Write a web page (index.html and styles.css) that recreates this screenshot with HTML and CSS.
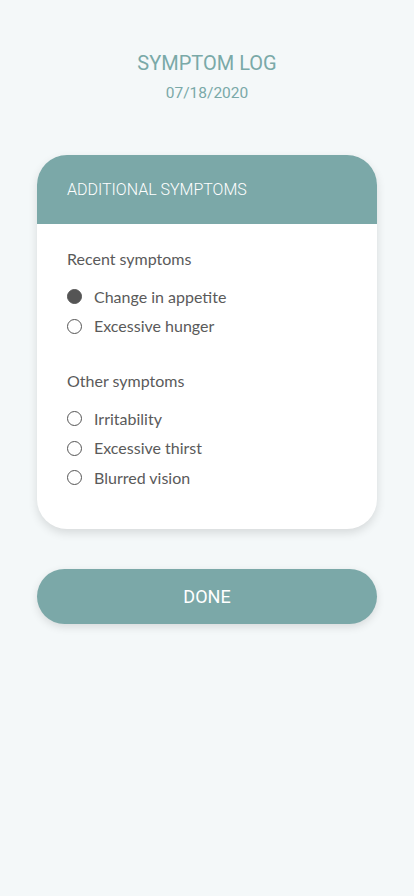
FILE: index.html
```html
<!DOCTYPE html>
<html lang="en">
<head>
    <meta charset="UTF-8">
    <meta name="viewport" content="width=device-width, initial-scale=1.0">
    <title>Symptom Log</title>
    <link rel="stylesheet" href="styles.css">
</head>
<body>
    <header class="page-header">
        <h1>SYMPTOM LOG</h1>
        <p class="date">07/18/2020</p>
    </header>
    <main class="container">
        <section class="card">
            <div class="card-header">ADDITIONAL SYMPTOMS</div>
            <div class="card-body">
                <div class="group">
                    <h2>Recent symptoms</h2>
                    <ul class="options">
                        <li class="option checked"><span class="radio"></span>Change in appetite</li>
                        <li class="option"><span class="radio"></span>Excessive hunger</li>
                    </ul>
                </div>
                <div class="group">
                    <h2>Other symptoms</h2>
                    <ul class="options">
                        <li class="option"><span class="radio"></span>Irritability</li>
                        <li class="option"><span class="radio"></span>Excessive thirst</li>
                        <li class="option"><span class="radio"></span>Blurred vision</li>
                    </ul>
                </div>
            </div>
        </section>
        <button class="done-btn">DONE</button>
    </main>
</body>
</html>
```

FILE: styles.css
```css
* {
    margin: 0;
    padding: 0;
    box-sizing: border-box;
}
body {
    font-family: 'Lato', 'Open Sans', sans-serif;
    background-color: #f4f8f9;
    color: #555;
    min-height: 100vh;
}
.page-header {
    text-align: center;
    padding-top: 52px;
    font-family: 'Roboto', sans-serif;
    color: #7aa9a8;
}
.page-header h1 {
    font-size: 20px;
    font-weight: 400;
    line-height: 22px;
}
.date {
    font-size: 15.5px;
    margin-top: 10px;
    line-height: 18px;
}
.container {
    padding: 0 37px;
    margin-top: 53px;
}
.card {
    background-color: #fff;
    border-radius: 30px;
    overflow: hidden;
    box-shadow: 0 4px 10px rgba(0, 0, 0, 0.12);
}
.card-header {
    background-color: #7ba8a8;
    color: #fff;
    font-family: 'Roboto', sans-serif;
    font-weight: 300;
    font-size: 16px;
    height: 69px;
    padding: 25px 30px 0;
}
.card-body {
    padding: 24px 30px 36px;
}
.group + .group {
    margin-top: 29px;
}
.group h2 {
    font-size: 16px;
    font-weight: 400;
    line-height: 22px;
    color: #5a5a5a;
}
.options {
    list-style: none;
    margin-top: 12px;
}
.option {
    display: flex;
    align-items: center;
    font-size: 16px;
    line-height: 22px;
    height: 29.5px;
    color: #5a5a5a;
}
.radio {
    width: 15px;
    height: 15px;
    border: 1.2px solid #555;
    border-radius: 50%;
    margin-right: 12px;
}
.option.checked .radio {
    background-color: #555;
}
.done-btn {
    display: block;
    width: 100%;
    height: 55px;
    margin-top: 40px;
    border: none;
    border-radius: 28px;
    background-color: #7ba8a8;
    color: #fff;
    font-family: 'Roboto', sans-serif;
    font-size: 18px;
    box-shadow: 0 3px 8px rgba(0, 0, 0, 0.12);
}
```
